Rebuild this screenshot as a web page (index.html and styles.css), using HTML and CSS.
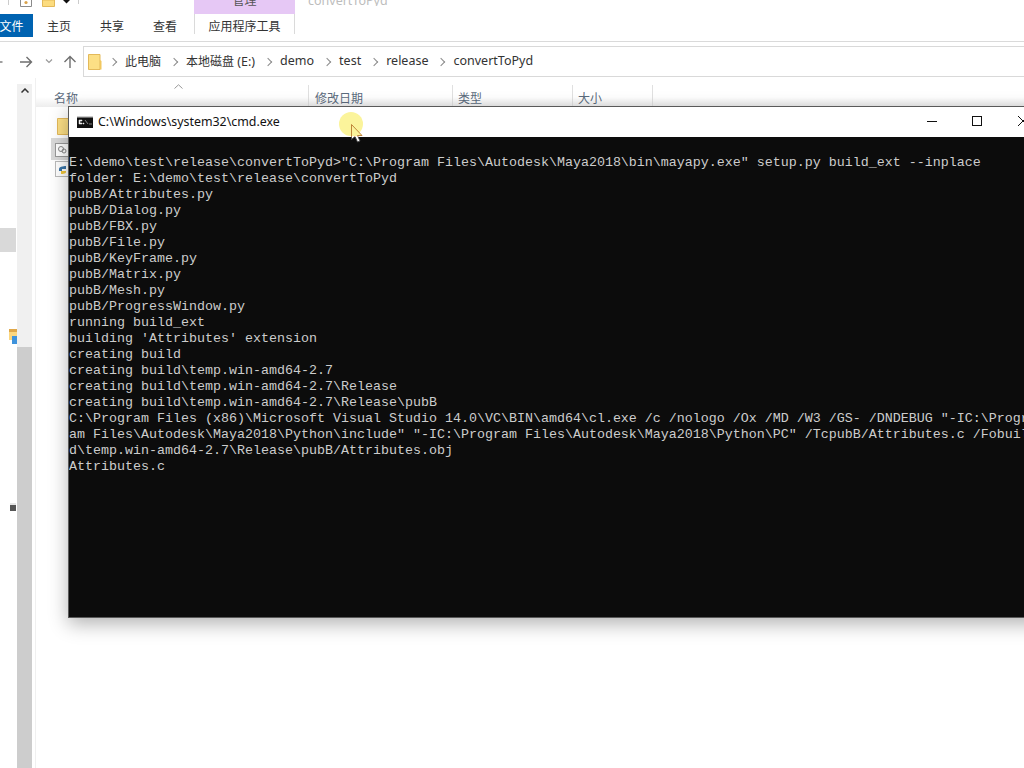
FILE: index.html
```html
<!DOCTYPE html>
<html lang="zh">
<head>
<meta charset="utf-8">
<title>cmd.exe</title>
<link rel="stylesheet" href="styles.css">
</head>
<body>
<div class="explorer">
  <header class="ribbon">
    <div class="quick">
      <span class="qa-sep first"></span>
      <svg class="qa-icon" width="12" height="8" viewBox="0 0 12 8"><path d="M.5 0V6.500H11.500V0" fill="#fff" stroke="#8a8a8a"/><circle cx="6" cy="2.500" r="1.600" fill="#d9a24a"/></svg>
      <svg class="qa-folder" width="13" height="8" viewBox="0 0 13 8"><path d="M.5 0V6.500H12.500V0Z" fill="#fcdc7f" stroke="#e3b95a"/></svg>
      <svg class="qa-drop" width="7" height="4" viewBox="0 0 7 4"><path d="M0 0H7L3.500 3.500Z" fill="#111"/></svg>
      <span class="qa-sep"></span>
      <div class="tool-head">管理</div>
      <span class="win-title">convertToPyd</span>
    </div>
    <nav class="tabs">
      <span class="tab file">文件</span>
      <span class="tab t1">主页</span>
      <span class="tab t2">共享</span>
      <span class="tab t3">查看</span>
      <span class="tab tool">应用程序工具</span>
    </nav>
  </header>
  <div class="addr-row">
    <svg class="nav back" width="5" height="12" viewBox="0 0 5 12"><path d="M0 6H2.500" stroke="#777" stroke-width="1.400"/></svg>
    <svg class="nav fwd" width="14" height="12" viewBox="0 0 14 12"><path d="M1 6H12.500M7.500 1L12.500 6L7.500 11" fill="none" stroke="#6f6f6f" stroke-width="1.400"/></svg>
    <svg class="nav drop" width="8" height="5" viewBox="0 0 8 5"><path d="M1 .5L4 3.500L7 .5" fill="none" stroke="#9a9a9a" stroke-width="1.200"/></svg>
    <svg class="nav up" width="14" height="13" viewBox="0 0 14 13"><path d="M7 13V1.500M1.500 7L7 1.500L12.500 7" fill="none" stroke="#6f6f6f" stroke-width="1.400"/></svg>
    <div class="addr">
      <svg class="addr-folder" width="14" height="16" viewBox="0 0 14 16"><path d="M.5.500H12V15.500H.5Z" fill="#fcdf85" stroke="#e3b95a"/><path d="M12 6L13.500 7V15.500H12Z" fill="#f1c75f"/></svg>
      <span class="chev first"></span><span class="crumb cn">此电脑</span>
      <span class="chev"></span><span class="crumb"><span class="cn">本地磁盘</span> (E:)</span>
      <span class="chev"></span><span class="crumb">demo</span>
      <span class="chev"></span><span class="crumb">test</span>
      <span class="chev"></span><span class="crumb">release</span>
      <span class="chev"></span><span class="crumb">convertToPyd</span>
    </div>
  </div>
  <div class="body">
    <aside class="nav-pane">
      <div class="pane-tree">
        <span class="sel-row"></span>
        <span class="pane-icon"></span>
        <span class="pane-drive"></span>
      </div>
      <div class="pane-scroll"><svg width="8" height="5" viewBox="0 0 8 5"><path d="M.5 4.500L4 1L7.500 4.500" fill="none" stroke="#333" stroke-width="1.500"/></svg></div>
    </aside>
    <main class="files">
      <div class="cols">
        <svg class="sort" width="9" height="5" viewBox="0 0 9 5"><path d="M.5 4.500L4.500 .8L8.500 4.500" fill="none" stroke="#999"/></svg>
        <span class="col c-name">名称</span>
        <span class="col c-date">修改日期</span>
        <span class="col c-type">类型</span>
        <span class="col c-size">大小</span>
      </div>
      <div class="file-icons">
        <svg class="f f1" width="12" height="17" viewBox="0 0 12 17"><path d="M.5.500H12V16.500H.5Z" fill="#fcdf85" stroke="#e3b95a"/></svg>
        <span class="f-sel"><svg width="14" height="14" viewBox="0 0 14 14"><rect x=".5" y=".5" width="13" height="13" fill="#fff" stroke="#999"/><circle cx="6" cy="6" r="2.500" fill="none" stroke="#888"/><circle cx="9" cy="8" r="2" fill="none" stroke="#888"/></svg></span>
        <svg class="f f3" width="14" height="16" viewBox="0 0 14 16"><rect x=".5" y=".5" width="13" height="15" fill="#fff" stroke="#bbb"/><path d="M4 8C4 5 11 5 11 5V8H7V10H4Z" fill="#3a75a8"/><path d="M11 8V11C11 13 6 13 6 13V10H11Z" fill="#f0c63c"/></svg>
      </div>
    </main>
  </div>
</div>

<section class="console">
  <div class="titlebar">
    <svg class="cmd-icon" width="16" height="12" viewBox="0 0 16 12"><rect width="16" height="12" fill="#111"/><rect width="16" height="1.500" fill="#ccc"/><path d="M2 4H5V5H3V7H5V8H2ZM6 7H7V8H6ZM8 4L11 8M12 8H15" stroke="#eee" fill="#eee" stroke-width=".5"/></svg>
    <span class="ttl">C:\Windows\system32\cmd.exe</span>
    <div class="win-btns">
      <svg class="btn-min" width="10" height="1" viewBox="0 0 10 1"><rect width="10" height="1" fill="#111"/></svg>
      <svg class="btn-max" width="10" height="10" viewBox="0 0 10 10"><rect x=".5" y=".5" width="9" height="9" fill="none" stroke="#111"/></svg>
      <svg class="btn-close" width="10" height="10" viewBox="0 0 10 10"><path d="M0 0L10 10M0 10L10 0" stroke="#111" fill="none"/></svg>
    </div>
  </div>
  <pre class="term">
E:\demo\test\release\convertToPyd&gt;"C:\Program Files\Autodesk\Maya2018\bin\mayapy.exe" setup.py build_ext --inplace
folder: E:\demo\test\release\convertToPyd
pubB/Attributes.py
pubB/Dialog.py
pubB/FBX.py
pubB/File.py
pubB/KeyFrame.py
pubB/Matrix.py
pubB/Mesh.py
pubB/ProgressWindow.py
running build_ext
building 'Attributes' extension
creating build
creating build\temp.win-amd64-2.7
creating build\temp.win-amd64-2.7\Release
creating build\temp.win-amd64-2.7\Release\pubB
C:\Program Files (x86)\Microsoft Visual Studio 14.0\VC\BIN\amd64\cl.exe /c /nologo /Ox /MD /W3 /GS- /DNDEBUG "-IC:\Progr
am Files\Autodesk\Maya2018\Python\include" "-IC:\Program Files\Autodesk\Maya2018\Python\PC" /TcpubB/Attributes.c /Fobuil
d\temp.win-amd64-2.7\Release\pubB/Attributes.obj
Attributes.c</pre>
</section>

<div class="cursor-halo"></div>
<svg class="cursor" width="12" height="19" viewBox="0 0 12 19"><defs><linearGradient id="cf" x1="0" y1="0" x2="0" y2="1"><stop offset=".68" stop-color="#fbf49b"/><stop offset=".68" stop-color="#fff"/></linearGradient><linearGradient id="cs" gradientUnits="userSpaceOnUse" x1="0" y1="0" x2="0" y2="19"><stop offset=".68" stop-color="#b8792f"/><stop offset=".68" stop-color="#444"/></linearGradient></defs><path d="M.5.500V15.500L4 12.500L6.500 18L9 17L6.500 11.500H11Z" fill="url(#cf)" stroke="url(#cs)" stroke-width=".9"/></svg>
</body>
</html>
```
FILE: styles.css
```css
* { box-sizing: border-box; }
html, body { margin: 0; height: 100%; }
body {
  width: 1024px;
  height: 768px;
  overflow: hidden;
  background: #fff;
  position: relative;
  font-family: "Noto Sans CJK SC", "Liberation Sans", sans-serif;
  color: #333;
}
.explorer { width: 1024px; height: 768px; display: flex; flex-direction: column; }

.ribbon { height: 42px; border-bottom: 1px solid #dadada; display: flex; flex-direction: column; flex: none; }
.quick { height: 14px; display: flex; align-items: flex-start; flex: none; }
.qa-sep { width: 1px; height: 4px; background: #ccc; margin-left: 8px; }
.qa-sep.first { height: 5px; }
.qa-icon { margin-left: 11px; }
.qa-folder { margin-left: 10px; }
.qa-drop { margin-left: 8px; }
.tool-head {
  margin-left: 115px;
  width: 101px;
  height: 14px;
  background: #e6c8f5;
  font-size: 12px;
  line-height: 0;
  text-align: center;
  color: #555;
  overflow: hidden;
}
.win-title { margin-left: 13px; font: 12.500px/2px "Noto Sans", sans-serif; color: #bdbdbd; height: 6px; overflow: hidden; }
.tabs { height: 23px; display: flex; font-size: 12px; line-height: 23px; color: #333; }
.tab { display: block; text-align: center; }
.tab.file { width: 33px; background: #0063b1; color: #fff; text-indent: -10px; overflow: hidden; }
.t1 { margin-left: 13px; width: 26px; }
.t2 { margin-left: 27px; width: 26px; }
.t3 { margin-left: 27px; width: 26px; }
.tab.tool {
  margin-left: 16px;
  width: 101px;
  height: 20px;
  border-left: 1px solid #dadada;
  border-right: 1px solid #dadada;
}

.addr-row { height: 36px; display: flex; align-items: center; padding-top: 3px; flex: none; }
.nav.fwd { margin-left: 14px; }
.nav.drop { margin-left: 12px; }
.nav.up { margin-left: 10px; }
.addr {
  margin-left: 6px;
  flex: 1;
  height: 31px;
  border: 1px solid #d9d9d9;
  border-right: 0;
  display: flex;
  align-items: center;
  padding-left: 4px;
  font: 12.500px "Noto Sans", "Noto Sans CJK SC", sans-serif;
  color: #333;
}
.addr-folder { flex: none; }
.chev { width: 25px; flex: none; display: flex; justify-content: center; }
.chev::before {
  content: "";
  display: block;
  width: 5px;
  height: 5px;
  border-top: 1.500px solid #8a8a8a;
  border-right: 1.500px solid #8a8a8a;
  transform: rotate(45deg);
}
.chev.first { margin-left: -2px; }
.crumb { white-space: nowrap; margin-bottom: 2px; }
.cn { font-size: 12px; }

.body { flex: 1; display: flex; min-height: 0; }
.nav-pane { width: 36px; display: flex; flex: none; border-right: 1px solid #f0f0f0; }
.pane-tree { width: 17px; position: relative; flex: none; }
.sel-row { position: absolute; left: 0; top: 150px; width: 16px; height: 24px; background: #d9d9d9; }
.pane-icon { position: absolute; left: 9px; top: 251px; width: 8px; height: 11px; background: linear-gradient(#e0a84a 3px, #fcd77f 3px); }
.pane-icon::after { content: ""; position: absolute; left: 3px; top: 7px; width: 5px; height: 8px; background: #3f93dc; }
.pane-drive { position: absolute; left: 10px; top: 425px; width: 6px; height: 8px; background: linear-gradient(#e6e6e6 30%, #555 30%); }
.pane-scroll {
  width: 15px;
  margin: 6px 3px 0 0;
  background: linear-gradient(#f0f0f0 263px, #cdcdcd 263px);
  display: flex;
  justify-content: center;
  padding-top: 4px;
}
.pane-scroll svg { display: block; }

.files { flex: 1; position: relative; }
.cols { height: 29px; position: relative; font-size: 12px; color: #5b6b7d; display: flex; align-items: flex-end; background: linear-gradient(#fff 65%, #ededed); }
.sort { position: absolute; left: 138px; top: 6px; }
.col { display: block; height: 22px; line-height: 25px; padding-left: 5px; border-right: 1px solid #e0e0e0; }
.c-name { padding-left: 18px; width: 273px; }
.c-date { width: 144px; padding-left: 6px; }
.c-type { width: 120px; }
.c-size { width: 80px; }
.file-icons { position: relative; }
.f { position: absolute; }
.f1 { left: 21px; top: 11px; }
.f-sel { position: absolute; left: 15px; top: 31px; width: 20px; height: 22px; background: #d9d9d9; padding: 5px 0 0 4px; }
.f-sel svg { display: block; }
.f3 { left: 19px; top: 54px; }

.console {
  position: absolute;
  left: 68px;
  top: 106px;
  width: 1000px;
  height: 512px;
  border: 1px solid #5a5a5a;
  background: #0c0c0c;
  box-shadow: 0 6px 18px rgba(0, 0, 0, .3);
  display: flex;
  flex-direction: column;
}
.titlebar { height: 30px; background: #fff; display: flex; align-items: center; position: relative; flex: none; }
.cmd-icon { margin-left: 8px; }
.ttl { margin: 0 0 2px 5px; font: 12.400px "Noto Sans", sans-serif; color: #111; }
.win-btns { position: absolute; left: 0; top: 0; width: 100%; height: 100%; }
.win-btns svg { position: absolute; }
.btn-min { left: 858px; top: 14px; }
.btn-max { left: 903px; top: 9px; }
.btn-close { left: 949px; top: 9px; }
.term {
  margin: 0;
  padding: 18px 0 0 0;
  font: 13.333px/16px "Liberation Mono", monospace;
  color: #cccccc;
  white-space: pre;
  overflow: hidden;
  flex: 1;
}
.cursor-halo { position: absolute; left: 339px; top: 112px; width: 24px; height: 24px; border-radius: 50%; background: #fbf49b; }
.cursor { position: absolute; left: 351px; top: 124px; }
```
